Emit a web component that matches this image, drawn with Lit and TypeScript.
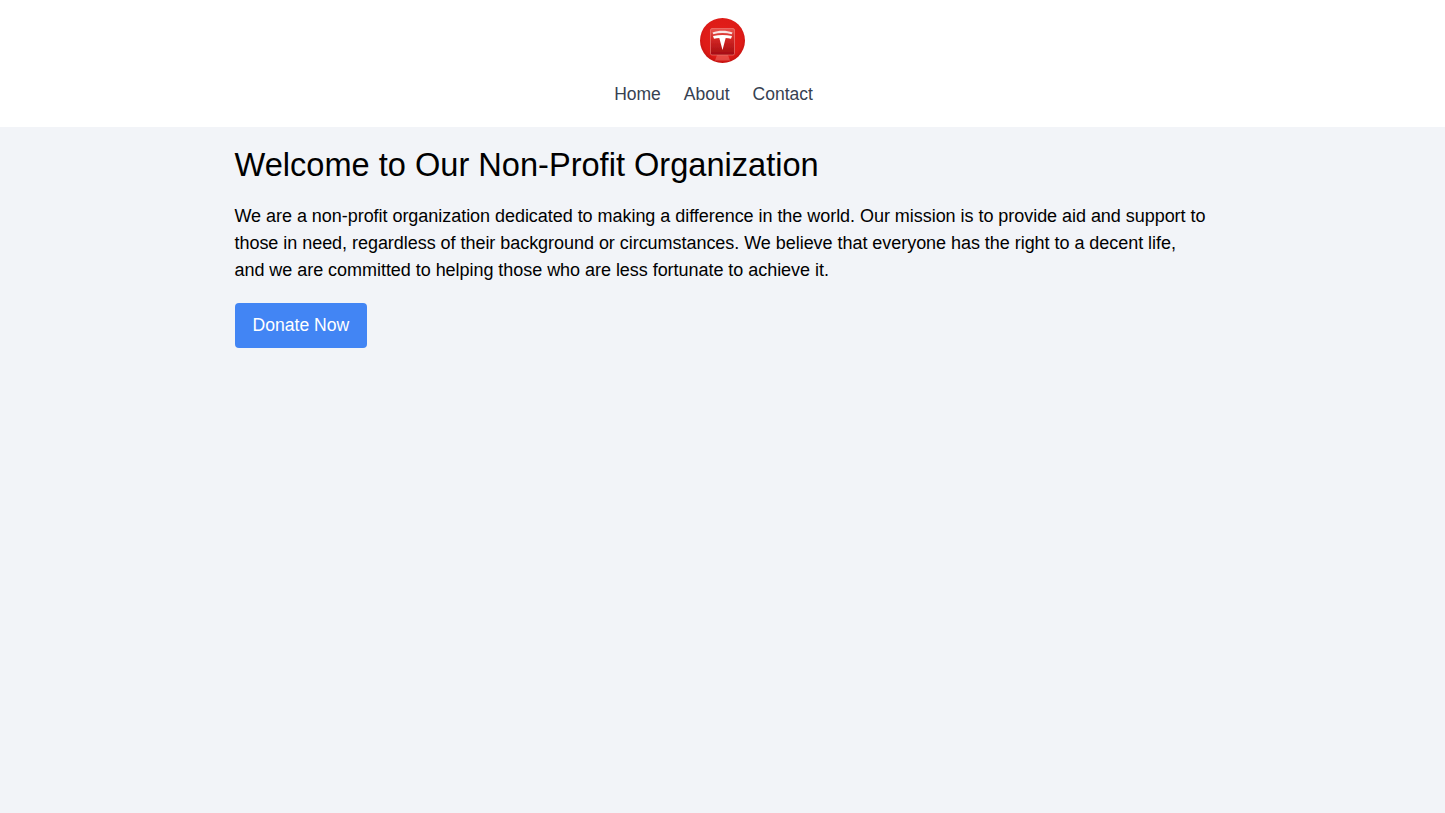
import { html, css, LitElement, CSSResultArray } from 'lit';
import { customElement } from 'lit/decorators.js';

const navLinks = ['Home', 'About', 'Contact'];

@customElement('app-root')
export class AppRoot extends LitElement {
  static get styles(): CSSResultArray {
    return [
      css`
        :host {
          display: block;
          min-height: 813px;
          background-color: #f2f4f8;
          color: #000;
          font-family: 'Liberation Sans', Arial, sans-serif;
          font-size: 18px;
          line-height: 27px;
        }
        header {
          display: flex;
          flex-direction: column;
          align-items: center;
          gap: 18px;
          padding: 18px 0 19px;
          background-color: #fff;
        }
        .logo {
          display: block;
          width: 45px;
          height: 45px;
        }
        nav {
          display: flex;
          gap: 23px;
          padding-right: 18px;
          font-size: 17.5px;
        }
        nav a {
          color: #374151;
          text-decoration: none;
        }
        main {
          box-sizing: border-box;
          max-width: 1024px;
          margin: 0 auto;
          padding: 18px 24px;
        }
        h1 {
          margin: 0 0 18px;
          font-size: 32.6px;
          font-weight: 400;
          line-height: 40px;
        }
        p {
          margin: 0 0 19px;
          letter-spacing: -0.04px;
        }
        .donate {
          display: inline-block;
          padding: 9px 18px;
          border-radius: 4px;
          background-color: #4285f4;
          color: #fff;
          font-size: 17.6px;
          text-decoration: none;
        }
      `,
    ];
  }

  private renderLogo() {
    return html`
      <svg class="logo" viewBox="0 0 45 45" aria-label="Logo">
        <defs>
          <radialGradient id="disc" cx="50%" cy="45%" r="55%">
            <stop offset="0%" stop-color="#e4201c" />
            <stop offset="80%" stop-color="#de1b17" />
            <stop offset="100%" stop-color="#c51210" />
          </radialGradient>
          <linearGradient id="tile" x1="0" y1="0" x2="0" y2="1">
            <stop offset="0%" stop-color="#e8554f" />
            <stop offset="40%" stop-color="#d32724" />
            <stop offset="100%" stop-color="#a50d12" />
          </linearGradient>
          <filter id="soft" x="-10%" y="-10%" width="120%" height="120%">
            <feGaussianBlur stdDeviation="0.35" />
          </filter>
        </defs>
        <circle cx="22.5" cy="22.5" r="22.5" fill="url(#disc)" />
        <g filter="url(#soft)">
          <rect
            x="10.500"
            y="10.500"
            width="24"
            height="26.500"
            rx="1.500"
            fill="url(#tile)"
            stroke="#f08f8a"
            stroke-opacity="0.7"
            stroke-width="0.8"
          />
          <path d="M17 37h11l2 5.500h-15z" fill="#ee6f68" opacity="0.55" />
          <path d="M12.500 14.500c6.200-2.200 13.800-2.200 20 0l-.8 1.800c-5.800-1.600-12.600-1.600-18.400 0z" fill="#f8e4e4" />
          <path
            d="M13 18c6.300-1.300 12.700-1.300 19 0l-1 2.700c-1.900-.5-3.600-.7-5.300-.8l-3.200 12.100-3.200-12.100c-1.700.1-3.400.3-5.300.8z"
            fill="#fff"
          />
        </g>
      </svg>
    `;
  }

  render() {
    return html`
      <header>
        ${this.renderLogo()}
        <nav>${navLinks.map((link) => html`<a href="#">${link}</a>`)}</nav>
      </header>
      <main>
        <h1>Welcome to Our Non-Profit Organization</h1>
        <p>
          We are a non-profit organization dedicated to making a difference in the world. Our
          mission is to provide aid and support to those in need, regardless of their background
          or circumstances. We believe that everyone has the right to a decent life, and we are
          committed to helping those who are less fortunate to achieve it.
        </p>
        <a class="donate" href="#">Donate Now</a>
      </main>
    `;
  }
}

declare global {
  interface HTMLElementTagNameMap {
    'app-root': AppRoot;
  }
}
